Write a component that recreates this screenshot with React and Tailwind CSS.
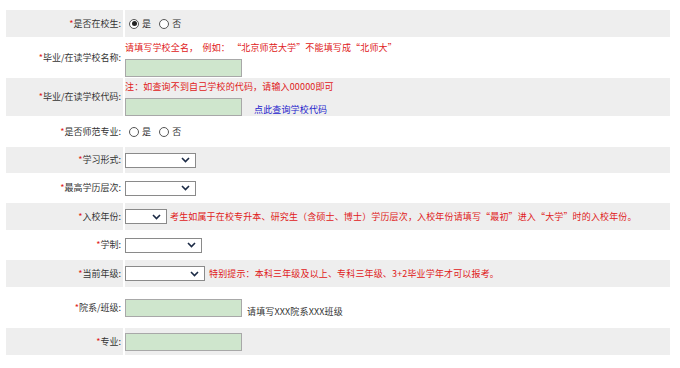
import React from 'react';

const font = { fontFamily: '"Noto Sans CJK SC", "Liberation Sans", sans-serif' };

const Radio = ({ checked, label }) => (
    <span className="inline-flex items-center gap-[3px] mr-[8px]">
        <span className="w-[10px] h-[10px] rounded-full border border-[#555] bg-white flex items-center justify-center">
            {checked && <span className="w-[5px] h-[5px] rounded-full bg-[#222]"></span>}
        </span>
        <span>{label}</span>
    </span>
);

const Select = ({ width }) => (
    <span className={`inline-flex items-center justify-end h-[15px] border border-[#8a8a8a] bg-white pr-[5px] shrink-0 ${width}`}>
        <svg width="9" height="6" viewBox="0 0 9 6">
            <path d="M1 1 L4.5 4.5 L8 1" fill="none" stroke="#1b2a45" strokeWidth="1.6" />
        </svg>
    </span>
);

const Input = () => (
    <span className="block w-[117px] h-[18px] bg-[#cfe6cd] border border-[#a8a8a8] shrink-0"></span>
);

const Row = ({ label, gray, h, children, align = 'items-center' }) => (
    <div className={`grid grid-cols-[117px_1fr] gap-x-[2px] ${h}`}>
        <div className={`flex items-center justify-end pr-[2px] ${gray ? 'bg-[#eeeeee]' : ''}`}>
            <span className="text-[#e02020]">*</span>
            <span>{label}:</span>
        </div>
        <div className={`flex ${align} tracking-[0.15px] ${gray ? 'bg-[#eeeeee]' : ''}`}>{children}</div>
    </div>
);

export default function App() {
    return (
        <div className="bg-white w-[680px] h-[368px] pt-[10px] pl-[6px] text-[9px] leading-[12px] text-[#333]" style={font}>
            <div className="w-[664px]">
                <Row label="是否在校生" gray h="h-[27px]">
                    <div className="pl-[4px] flex items-center">
                        <Radio checked label="是" />
                        <Radio label="否" />
                    </div>
                </Row>
                <Row label="毕业/在读学校名称" h="h-[41px]">
                    <div className="flex flex-col gap-[5px] pt-[3px]">
                        <span className="text-[#e02020] whitespace-pre">请填写学校全名，  例如： “北京师范大学”不能填写成“北师大”</span>
                        <Input />
                    </div>
                </Row>
                <Row label="毕业/在读学校代码" gray h="h-[38px]">
                    <div className="flex flex-col gap-[5px] pt-[2px]">
                        <span className="text-[#e02020]">注：如查询不到自己学校的代码，请输入00000即可</span>
                        <div className="flex items-end gap-[12px]">
                            <Input />
                            <span className="text-[#2222cc] leading-[12px]">点此查询学校代码</span>
                        </div>
                    </div>
                </Row>
                <Row label="是否师范专业" h="h-[31px]">
                    <div className="pl-[4px] flex items-center">
                        <Radio label="是" />
                        <Radio label="否" />
                    </div>
                </Row>
                <Row label="学习形式" gray h="h-[26px]">
                    <Select width="w-[71px]" />
                </Row>
                <Row label="最高学历层次" h="h-[30px]">
                    <Select width="w-[71px]" />
                </Row>
                <Row label="入校年份" gray h="h-[27px]">
                    <Select width="w-[42px]" />
                    <span className="text-[#e02020] ml-[3px]">考生如属于在校专升本、研究生（含硕士、博士）学历层次，入校年份请填写“最初”进入“大学”时的入校年份。</span>
                </Row>
                <Row label="学制" h="h-[30px]">
                    <Select width="w-[77px]" />
                </Row>
                <Row label="当前年级" gray h="h-[27px]">
                    <Select width="w-[80px]" />
                    <span className="text-[#e02020] ml-[4px]">特别提示：本科三年级及以上、专科三年级、3+2毕业学年才可以报考。</span>
                </Row>
                <Row label="院系/班级" h="h-[41px]">
                    <div className="flex items-end gap-[5px]">
                        <Input />
                        <span className="leading-[10px]">请填写XXX院系XXX班级</span>
                    </div>
                </Row>
                <Row label="专业" gray h="h-[27px]">
                    <Input />
                </Row>
            </div>
        </div>
    );
}
